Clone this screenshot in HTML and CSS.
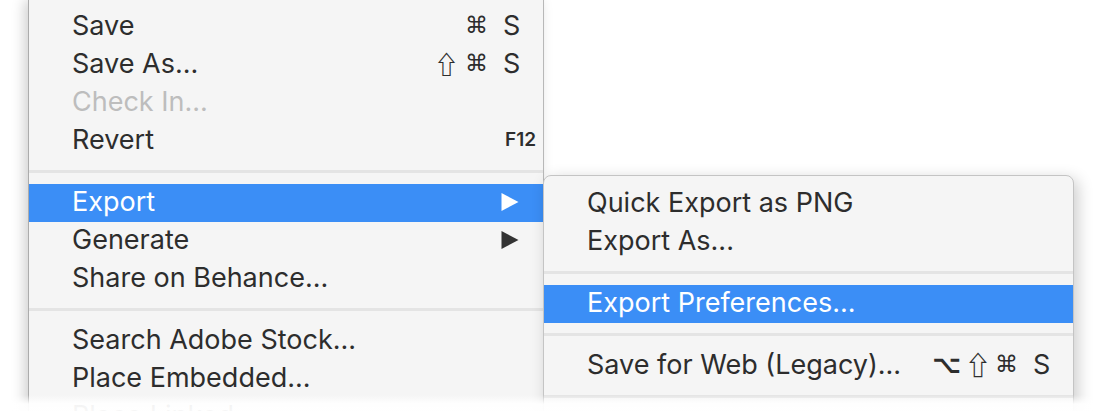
FILE: index.html
```html
<!DOCTYPE html>
<html>
<head>
<meta charset="utf-8">
<link rel="stylesheet" href="styles.css">
</head>
<body>
<div class="stage">
  <div class="menu main">
    <div class="item"><span class="label">Save</span><span class="mods"><span class="g cmd">⌘</span></span><span class="key">S</span></div>
    <div class="item"><span class="label">Save As...</span><span class="mods"><span class="g shift">⇧</span><span class="g cmd">⌘</span></span><span class="key">S</span></div>
    <div class="item disabled"><span class="label">Check In...</span></div>
    <div class="item"><span class="label">Revert</span><span class="key fn">F12</span></div>
    <div class="sep"></div>
    <div class="item active"><span class="label">Export</span><span class="key"><svg class="arrow" viewBox="0 0 17 18"><polygon points="0,0 17,9 0,18"/></svg></span></div>
    <div class="item"><span class="label">Generate</span><span class="key"><svg class="arrow" viewBox="0 0 17 18"><polygon points="0,0 17,9 0,18"/></svg></span></div>
    <div class="item"><span class="label">Share on Behance...</span></div>
    <div class="sep"></div>
    <div class="item"><span class="label">Search Adobe Stock...</span></div>
    <div class="item"><span class="label">Place Embedded...</span></div>
    <div class="item"><span class="label">Place Linked...</span></div>
  </div>
  <div class="menu sub">
    <div class="item"><span class="label">Quick Export as PNG</span></div>
    <div class="item"><span class="label">Export As...</span></div>
    <div class="sep"></div>
    <div class="item active"><span class="label">Export Preferences...</span></div>
    <div class="sep"></div>
    <div class="item"><span class="label">Save for Web (Legacy)...</span><span class="mods"><span class="g opt">⌥</span><span class="g shift">⇧</span><span class="g cmd">⌘</span></span><span class="key">S</span></div>
    <div class="sep"></div>
  </div>
  <div class="fade"></div>
</div>
</body>
</html>
```
FILE: styles.css
```css
html, body {
  margin: 0;
  padding: 0;
  background: #ffffff;
}

.stage {
  position: relative;
  width: 1103px;
  height: 411px;
  overflow: hidden;
  font-family: "Inter", "Liberation Sans", sans-serif;
  font-size: 27px;
  color: #2d2d2d;
}

.menu {
  background: #f5f5f5;
  box-sizing: border-box;
}

.main {
  margin-left: 28px;
  width: 516px;
  height: 460px;
  padding-top: 8px;
  border-left: 1px solid #acacac;
  border-right: 1px solid #b8b8b8;
  box-shadow: -4px 0 12px rgba(0, 0, 0, 0.18);
}

.sub {
  position: absolute;
  left: 543px;
  top: 175px;
  width: 531px;
  height: 300px;
  padding-top: 9px;
  border: 1px solid #c4c4c4;
  border-radius: 8px 8px 0 0;
  box-shadow: 4px 4px 16px rgba(0, 0, 0, 0.2);
}

.item {
  display: flex;
  align-items: center;
  height: 38px;
  padding-left: 43px;
  white-space: nowrap;
}

.label {
  flex: 1;
  position: relative;
  top: -2px;
}

.disabled {
  color: #bdbdbd;
}

.active {
  background: #3b8ef6;
  color: #ffffff;
}

.sep {
  height: 3px;
  margin: 10px 0 11px;
  background: #e4e4e4;
}

.mods {
  display: flex;
  align-items: center;
  gap: 4px;
  margin-right: 15px;
  font-family: "DejaVu Sans", sans-serif;
  position: relative;
  top: -2px;
}

.g {
  line-height: 1;
}

.cmd {
  font-size: 23px;
}

.shift {
  font-family: "Noto Sans CJK JP", "DejaVu Sans", sans-serif;
  font-size: 25px;
  font-weight: 600;
}

.main .shift {
  margin-right: 2px;
}

.sub .shift {
  font-size: 26px;
}

.opt {
  font-size: 25px;
  font-weight: bold;
}

.key {
  width: 40px;
  display: flex;
  align-items: center;
  position: relative;
  top: -2px;
}

.fn {
  font-size: 19px;
  font-weight: 600;
  padding-left: 2px;
  width: 38px;
}

.arrow {
  width: 18px;
  height: 18px;
  fill: #333333;
  margin-top: 2px;
  margin-left: -2px;
}

.active .arrow {
  fill: #ffffff;
}

.fade {
  position: absolute;
  left: 0;
  right: 0;
  top: 395px;
  bottom: 0;
  background: linear-gradient(to bottom, rgba(255, 255, 255, 0) 0px, rgba(255, 255, 255, 0.94) 9px, rgba(255, 255, 255, 0.96) 16px);
}
```
